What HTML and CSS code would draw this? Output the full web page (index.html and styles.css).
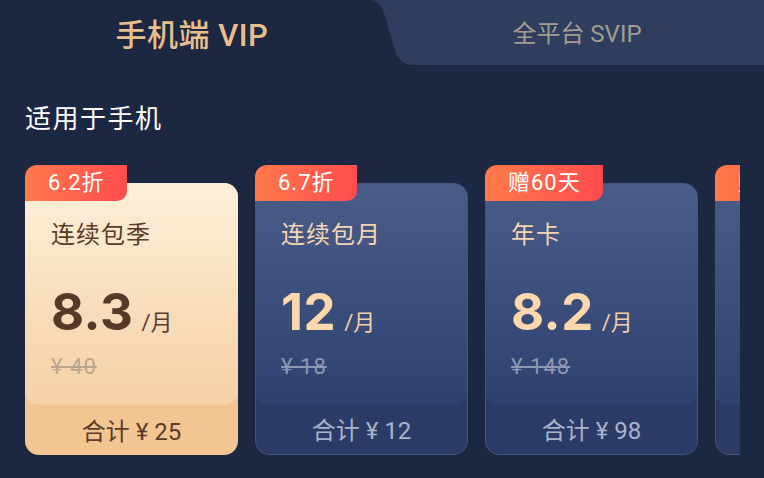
FILE: index.html
```html
<!DOCTYPE html>
<html lang="zh">
<head>
<meta charset="utf-8">
<link rel="stylesheet" href="styles.css">
</head>
<body>
<div class="tabs">
  <div class="tab tab-active">手机端 VIP</div>
  <div class="tab tab-other">
    <svg class="tab-shape" viewBox="0 0 394 65" preserveAspectRatio="none" width="394" height="65">
      <path d="M0 0 L394 0 L394 65 L44 65 C32 65 27 58 24 47 L15 16 C12 6 8 0 0 0 Z" fill="#2f3d5f"/>
    </svg>
    <span class="tab-label">全平台 SVIP</span>
  </div>
</div>

<div class="section-title">适用于手机</div>

<div class="cards">
  <div class="card card-light">
    <div class="badge">6.2折</div>
    <div class="card-body">
      <div class="panel">
        <div class="title">连续包季</div>
        <div class="price"><span class="num">8.3</span><span class="unit">/月</span></div>
        <div class="orig">¥ 40</div>
      </div>
      <div class="footer">合计 ¥ 25</div>
    </div>
  </div>
  <div class="card card-dark">
    <div class="badge">6.7折</div>
    <div class="card-body">
      <div class="panel">
        <div class="title">连续包月</div>
        <div class="price"><span class="num">12</span><span class="unit">/月</span></div>
        <div class="orig">¥ 18</div>
      </div>
      <div class="footer">合计 ¥ 12</div>
    </div>
  </div>
  <div class="card card-dark">
    <div class="badge">赠60天</div>
    <div class="card-body">
      <div class="panel">
        <div class="title">年卡</div>
        <div class="price"><span class="num">8.2</span><span class="unit">/月</span></div>
        <div class="orig">¥ 148</div>
      </div>
      <div class="footer">合计 ¥ 98</div>
    </div>
  </div>
  <div class="card card-dark">
    <div class="badge">赠7天</div>
    <div class="card-body">
      <div class="panel">
        <div class="title">连续包年</div>
        <div class="price"><span class="num">7.5</span><span class="unit">/月</span></div>
        <div class="orig">¥ 108</div>
      </div>
      <div class="footer">合计 ¥ 90</div>
    </div>
  </div>
</div>
</body>
</html>
```

FILE: styles.css
```css
html, body {
  margin: 0;
  padding: 0;
}
body {
  width: 764px;
  height: 478px;
  overflow: hidden;
  background: #1c2742;
  font-family: Roboto, "Noto Sans CJK SC", sans-serif;
}

.tabs {
  display: flex;
  height: 65px;
}
.tab {
  height: 65px;
  display: flex;
  align-items: center;
  justify-content: center;
}
.tab-active {
  width: 370px;
  padding-left: 14px;
  box-sizing: border-box;
  color: #e8bf8c;
  font-size: 31px;
  font-weight: 500;
  letter-spacing: 0.5px;
}
.tab-other {
  flex: 1;
  position: relative;
  padding-left: 20px;
  color: #a39d92;
  font-size: 24px;
}
.tab-shape {
  position: absolute;
  left: 0;
  top: 0;
  width: 100%;
  height: 100%;
}
.tab-label {
  position: relative;
  margin-top: -3px;
}

.section-title {
  margin: 37px 0 0 25px;
  height: 34px;
  line-height: 34px;
  color: #ffffff;
  font-size: 26px;
  letter-spacing: 1.5px;
}

.cards {
  display: flex;
  gap: 17px;
  margin: 29px 0 0 25px;
  width: 715px;
  overflow: hidden;
}
.card {
  flex: 0 0 213px;
  position: relative;
  padding-top: 18px;
}
.badge {
  position: absolute;
  left: 0;
  top: 0;
  height: 36px;
  line-height: 36px;
  padding: 0 22px 0 23px;
  text-align: center;
  color: #ffffff;
  font-size: 22px;
  letter-spacing: 1px;
  border-radius: 12px 0 10px 0;
  background: linear-gradient(90deg, #ff7a4b, #ff4b4e);
  z-index: 1;
}
.card-body {
  height: 272px;
  border-radius: 14px;
  overflow: hidden;
  box-sizing: border-box;
  display: flex;
  flex-direction: column;
}
.panel {
  height: 222px;
  box-sizing: border-box;
  padding: 37px 0 0 26px;
  border-radius: 0 0 14px 14px;
}
.title {
  height: 30px;
  line-height: 30px;
  font-size: 24px;
  letter-spacing: 1px;
}
.price {
  margin-top: 36px;
  display: flex;
  align-items: baseline;
  height: 51px;
  line-height: 51px;
}
.num {
  font-family: Inter, Roboto, sans-serif;
  font-weight: 700;
  font-size: 51px;
  letter-spacing: 0.5px;
}
.unit {
  margin-left: 8px;
  font-size: 22px;
}
.orig {
  margin-top: 15px;
  height: 30px;
  line-height: 30px;
  font-size: 22px;
  letter-spacing: 1px;
  text-decoration: line-through;
  text-decoration-thickness: 2px;
}
.footer {
  flex: 1;
  display: flex;
  align-items: center;
  justify-content: center;
  font-size: 24px;
  padding-bottom: 2px;
}

.card-light .card-body {
  background: #f2c591;
}
.card-light .panel {
  background: linear-gradient(180deg, #fdf0da 0%, #f8dcb9 60%, #f5d1a6 100%);
}
.card-light .title { color: #5b3b2a; }
.card-light .num { color: #5a3826; }
.card-light .unit { color: #5b3b2a; }
.card-light .orig { color: #b9a68d; }
.card-light .footer { color: #5b3b2a; }

.card-dark .card-body {
  background: #2b3b65;
  border: 1px solid #44557e;
}
.card-dark .panel {
  margin: -1px -1px 0 -1px;
  background: linear-gradient(180deg, #4a5d89 0%, #3b4d7b 55%, #2f416f 100%);
}
.card-dark .title { color: #f6d6b2; }
.card-dark .num { color: #fdd8ad; }
.card-dark .unit { color: #f3d0a8; }
.card-dark .orig { color: #8d98b2; }
.card-dark .footer { color: #a9b3cb; }
```
